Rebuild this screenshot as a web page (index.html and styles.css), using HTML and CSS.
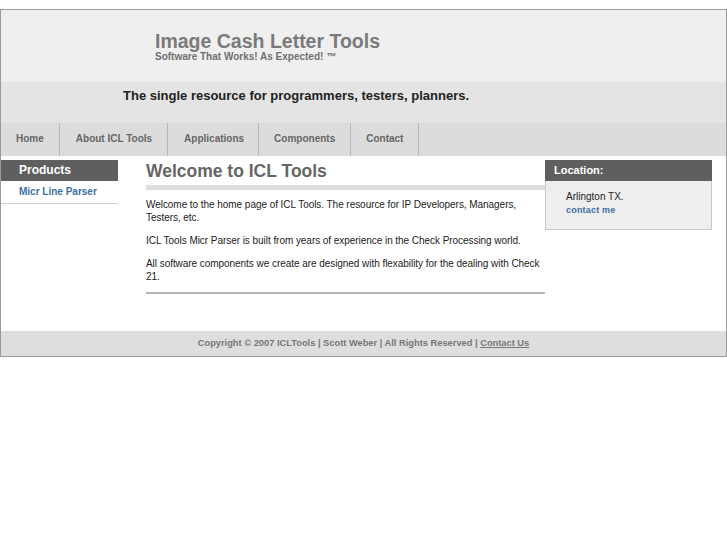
FILE: index.html
```html
<!DOCTYPE html>
<html>
<head>
<meta charset="utf-8">
<title>Image Cash Letter Tools</title>
<link rel="stylesheet" href="styles.css">
</head>
<body>
<div class="page">
  <div class="masthead">
    <div class="brand">
      <div class="brand-title">Image Cash Letter Tools</div>
      <div class="brand-sub">Software That Works! As Expected! &#8482;</div>
    </div>
  </div>
  <div class="tagline">The single resource for programmers, testers, planners.</div>
  <ul class="nav">
    <li class="nav-home"><a href="#">Home</a></li>
    <li class="nav-about"><a href="#">About ICL Tools</a></li>
    <li class="nav-apps"><a href="#">Applications</a></li>
    <li class="nav-comp"><a href="#">Components</a></li>
    <li class="nav-contact"><a href="#">Contact</a></li>
  </ul>
  <div class="content">
    <div class="sidebar">
      <div class="side-head">Products</div>
      <a class="side-link" href="#">Micr Line Parser</a>
    </div>
    <div class="main">
      <h1 class="main-title">Welcome to ICL Tools</h1>
      <div class="main-bar"></div>
      <p>Welcome to the home page of ICL Tools. The resource for IP Developers, Managers, Testers, etc.</p>
      <p>ICL Tools Micr Parser is built from years of experience in the Check Processing world.</p>
      <p class="last">All software components we create are designed with flexability for the dealing with Check 21.</p>
      <div class="main-rule"></div>
    </div>
    <div class="aside">
      <div class="aside-head">Location:</div>
      <div class="aside-body">
        <div class="aside-city">Arlington TX.</div>
        <a class="aside-link" href="#">contact me</a>
      </div>
    </div>
  </div>
  <div class="footer">Copyright &copy; 2007 ICLTools | Scott Weber | All Rights Reserved | <a href="#">Contact Us</a></div>
</div>
</body>
</html>
```

FILE: styles.css
```css
html, body {
  margin: 0;
  padding: 0;
  background: #fff;
}
body {
  padding-top: 9px;
  font-family: "Liberation Sans", Arial, sans-serif;
}
.page {
  border: 1px solid #9a9a9a;
  background: #fff;
}
.masthead {
  background: #efefef;
  height: 72px;
  padding-left: 154px;
  box-sizing: border-box;
  padding-top: 20px;
}
.brand-title {
  font-size: 19.5px;
  font-weight: bold;
  color: #7a7a7a;
  line-height: 22px;
}
.brand-sub {
  font-size: 10px;
  font-weight: bold;
  color: #6f6f6f;
  line-height: 11px;
  margin-top: -1px;
}
.tagline {
  background: #e4e4e4;
  height: 41px;
  box-sizing: border-box;
  padding: 6px 0 0 122px;
  font-size: 13px;
  font-weight: bold;
  color: #222;
}
.nav {
  list-style: none;
  margin: 0;
  padding: 0;
  display: flex;
  background: #dcdcdc;
  height: 33px;
}
.nav li {
  border-right: 1px solid #b8b8b8;
}
.nav a {
  display: block;
  padding: 0 15px;
  line-height: 31px;
  font-size: 10px;
  font-weight: bold;
  color: #666;
  text-decoration: none;
}
.nav-about a { padding: 0 15px 0 16px; }
.nav-apps a { padding: 0 14px 0 16px; }
.nav-comp a { padding: 0 15px 0 15px; }
.nav-contact a { padding: 0 15px 0 15px; }
.content {
  display: grid;
  grid-template-columns: 117px 1fr 167px;
  padding: 4px 14px 37px 0;
  align-items: start;
}
.side-head {
  background: #5f5f5f;
  color: #fff;
  font-size: 12px;
  font-weight: bold;
  height: 21px;
  line-height: 21px;
  padding-left: 18px;
}
.side-link {
  display: block;
  padding: 5px 0 0 18px;
  height: 17px;
  border-bottom: 1px solid #cfcfcf;
  font-size: 10px;
  font-weight: bold;
  color: #3d6fa3;
  text-decoration: none;
}
.main {
  margin-left: 28px;
}
.main-title {
  margin: 0;
  font-size: 17.5px;
  line-height: 22px;
  color: #666;
  font-weight: bold;
}
.main-bar {
  margin-top: 3px;
  height: 5px;
  background: #dedede;
  margin-bottom: 8px;
}
.main p {
  margin: 0 0 10px;
  font-size: 10px;
  line-height: 13px;
  color: #222;
  letter-spacing: -0.05px;
}
.main p.last {
  margin-bottom: 0;
}
.main-rule {
  margin-top: 9px;
  height: 2px;
  background: #b5b5b5;
}
.aside {
  border: 1px solid #c9c9c9;
  background: #eee;
}
.aside-head {
  background: #5f5f5f;
  color: #fff;
  font-size: 11px;
  font-weight: bold;
  height: 21px;
  line-height: 21px;
  padding-left: 9px;
  margin: -1px -1px 0;
}
.aside-body {
  padding: 9px 0 12px 20px;
}
.aside-city {
  font-size: 10px;
  color: #222;
  line-height: 13px;
}
.aside-link {
  display: block;
  font-size: 9px;
  font-weight: bold;
  color: #3d6fa3;
  text-decoration: none;
  line-height: 14px;
  letter-spacing: 0.2px;
}
.footer {
  background: #dedede;
  height: 25px;
  line-height: 25px;
  text-align: center;
  font-size: 9.3px;
  font-weight: bold;
  color: #777;
}
.footer a {
  color: #777;
}
```
